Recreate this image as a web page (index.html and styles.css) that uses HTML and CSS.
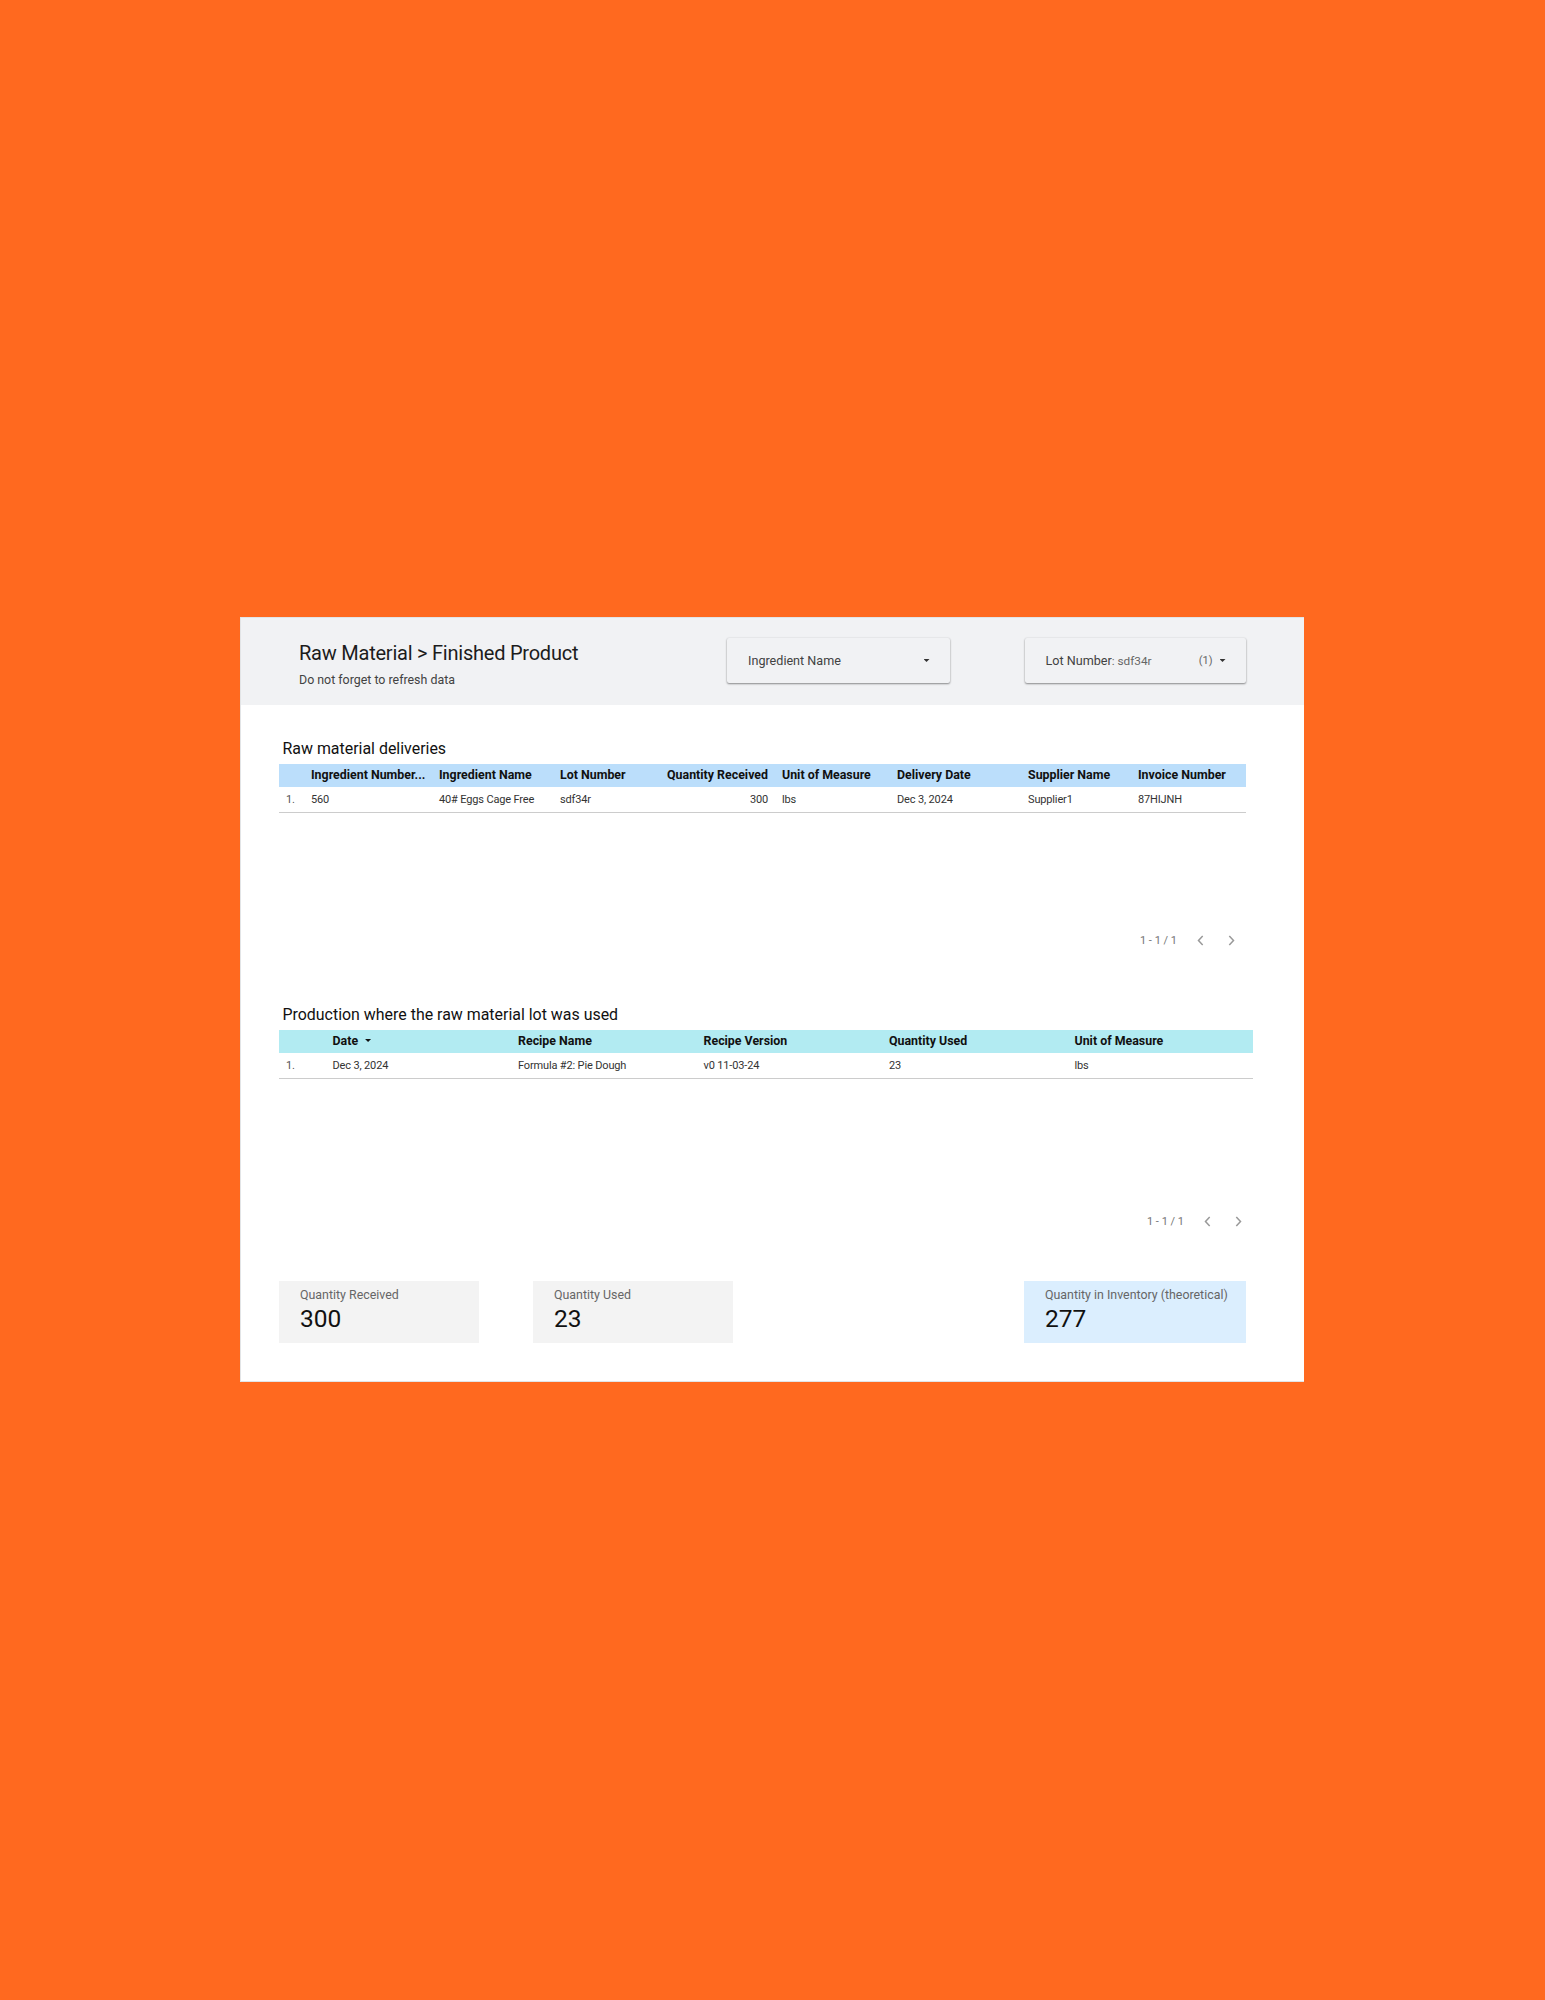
FILE: index.html
```
<!DOCTYPE html>
<html lang="en">
<head>
<meta charset="utf-8">
<title>Raw Material &gt; Finished Product</title>
<link rel="stylesheet" href="styles.css">
</head>
<body>
<main class="report">
  <header class="banner">
    <div class="banner-text">
      <h1 class="title">Raw Material &gt; Finished Product</h1>
      <p class="subtitle">Do not forget to refresh data</p>
    </div>
    <div class="filter filter-name"><span class="filter-label">Ingredient Name</span><span class="caret"></span></div>
    <div class="filter filter-lot"><span class="filter-label">Lot Number</span><span class="filter-value">: sdf34r</span><span class="filter-count">(1)</span><span class="caret"></span></div>
  </header>

  <section class="deliveries">
    <h2 class="heading">Raw material deliveries</h2>
    <div class="row head"><span></span><span>Ingredient Number...</span><span>Ingredient Name</span><span>Lot Number</span><span class="num">Quantity Received</span><span>Unit of Measure</span><span>Delivery Date</span><span>Supplier Name</span><span>Invoice Number</span></div>
    <div class="row"><span class="index">1.</span><span>560</span><span>40# Eggs Cage Free</span><span>sdf34r</span><span class="num">300</span><span>lbs</span><span>Dec 3, 2024</span><span>Supplier1</span><span>87HIJNH</span></div>
    <div class="pager"><span class="range">1 - 1 / 1</span><svg class="chevron" viewBox="0 0 7 11"><path d="M5.7 1L1.5 5.5l4.2 4.5"/></svg><svg class="chevron" viewBox="0 0 7 11"><path d="M1.3 1l4.2 4.5L1.3 10"/></svg></div>
  </section>

  <section class="production">
    <h2 class="heading">Production where the raw material lot was used</h2>
    <div class="row head"><span></span><span>Date<i class="caret sort"></i></span><span>Recipe Name</span><span>Recipe Version</span><span>Quantity Used</span><span>Unit of Measure</span></div>
    <div class="row"><span class="index">1.</span><span>Dec 3, 2024</span><span>Formula #2: Pie Dough</span><span>v0 11-03-24</span><span>23</span><span>lbs</span></div>
    <div class="pager"><span class="range">1 - 1 / 1</span><svg class="chevron" viewBox="0 0 7 11"><path d="M5.7 1L1.5 5.5l4.2 4.5"/></svg><svg class="chevron" viewBox="0 0 7 11"><path d="M1.3 1l4.2 4.5L1.3 10"/></svg></div>
  </section>

  <section class="cards">
    <div class="card"><span class="card-label">Quantity Received</span><span class="card-value">300</span></div>
    <div class="card"><span class="card-label">Quantity Used</span><span class="card-value">23</span></div>
    <div class="card stock"><span class="card-label">Quantity in Inventory (theoretical)</span><span class="card-value">277</span></div>
  </section>
</main>
</body>
</html>
```
FILE: styles.css
```
* { box-sizing: border-box; }
body { margin: 0; background: #ff691f; font-family: Roboto, "Liberation Sans", sans-serif; color: #212121; }
h1, h2, p { margin: 0; font-weight: 400; }
.report { display: flow-root; width: 1064px; height: 765px; margin: 617px 0 0 240px; background: #fff; border: 1px solid #e2e4e6; border-right: 0; }

/* Banner with title and filters */
.banner { display: flex; height: 87px; padding: 20px 57px 0 58px; background: #f1f2f4; }
.banner-text { width: 428px; }
.title { padding-top: 1px; font-size: 20px; line-height: 28px; letter-spacing: -.23px; color: #1c1c1c; }
.subtitle { margin-top: 4px; font-size: 12.4px; line-height: 18px; color: #424242; }
.filter { display: flex; align-items: center; height: 45px; padding: 0 20.5px 0 21px; border-radius: 2px; font-size: 12.6px; color: #424242; box-shadow: 0 1px 2px rgba(0, 0, 0, .42), 0 0 2px rgba(0, 0, 0, .1); }
.filter-name { width: 223px; }
.filter-lot { width: 221.5px; margin-left: 74.5px; }
.filter-value { font-size: 11.8px; color: #666; }
.filter-count { margin-left: auto; font-size: 11px; color: #666; }
.caret { width: 6px; height: 3px; background: #333; clip-path: polygon(0 0, 100% 0, 50% 100%); }
.filter-name .caret { margin-left: auto; }
.filter-count + .caret { margin-left: 7px; }

/* Tables */
.deliveries { width: 967px; height: 266px; margin-left: 38px; padding-top: 33px; }
.production { width: 974px; height: 310px; margin-left: 38px; padding-top: 33px; }
.heading { padding-left: 3.5px; font-size: 15.93px; line-height: 22px; height: 26px; color: #111; }
.row { display: grid; height: 26px; align-items: center; border-bottom: 1px solid #ccc; font-size: 11px; letter-spacing: -.15px; color: #333; white-space: nowrap; }
.deliveries .row { grid-template-columns: 32px 128px 121px 91px 117px 14px 115px 131px 110px 108px; }
.deliveries .row > :nth-child(6) { grid-column: 7; }
.production .row { grid-template-columns: 53.5px 185.5px 185.5px 185.5px 185.5px 178.5px; }
.row.head { height: 23px; padding-bottom: 3px; border: 0; font-size: 12.4px; font-weight: 700; letter-spacing: 0; color: #111; }
.deliveries .head { background: #bbdefb; }
.production .head { background: #b2ebf2; }
.num { text-align: right; }
.index { padding-left: 7px; color: #555; }
.sort { display: inline-block; margin-left: 7px; vertical-align: 2.5px; background: #111; }
.pager { display: flex; align-items: center; justify-content: flex-end; margin-top: 118px; height: 20px; padding-right: 11px; font-size: 11px; color: #757575; }
.production .pager { margin-top: 133px; }
.range { margin-bottom: 1px; }
.chevron { width: 7px; height: 11px; margin: 0 0 1px 20px; fill: none; stroke: #999; stroke-width: 1.5; }
.chevron + .chevron { margin-left: 24px; }

/* Score cards */
.cards { display: flex; padding-left: 38px; }
.card { width: 199.5px; height: 62px; padding: 5px 0 0 21px; background: #f3f3f3; margin-right: 54.5px; }
.stock { width: 222px; margin: 0 0 0 237px; background: #dbeefe; }
.card-label { display: block; font-size: 12.4px; line-height: 17px; color: #666; }
.card-value { display: block; padding-top: 1px; font-size: 24.5px; line-height: 29px; color: #111; }
```
